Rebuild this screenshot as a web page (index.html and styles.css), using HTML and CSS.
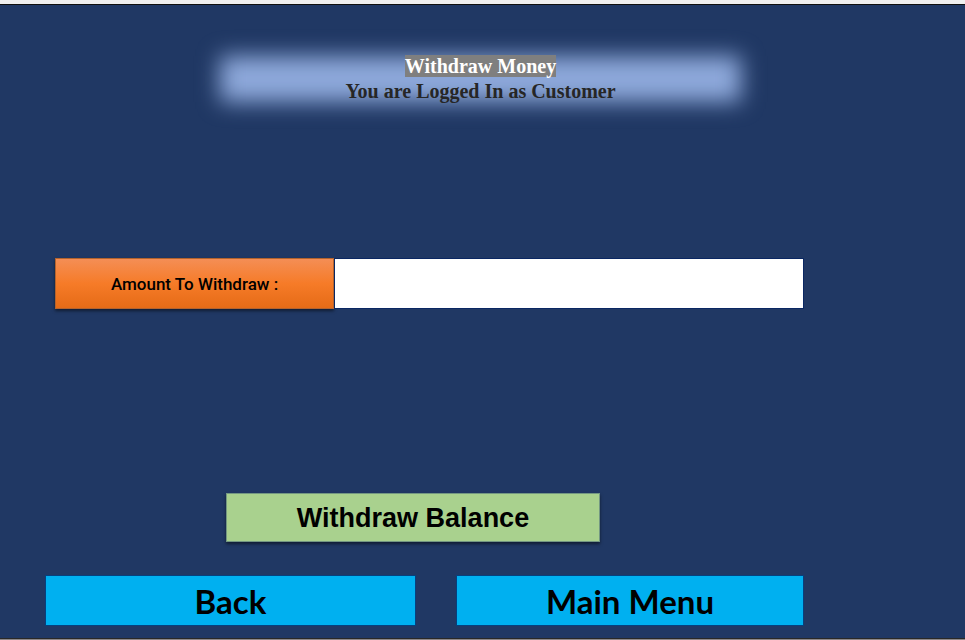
FILE: index.html
```html
<!DOCTYPE html>
<html lang="en">
<head>
<meta charset="utf-8">
<meta name="viewport" content="width=device-width, initial-scale=1">
<title>Withdraw Money</title>
<link rel="stylesheet" href="styles.css">
</head>
<body>
<main class="screen">
  <header class="banner">
    <h1 class="title"><span class="mark">Withdraw Money</span></h1>
    <p class="role">You are Logged In as Customer</p>
  </header>
  <form class="form">
    <div class="field">
      <label class="field-label" for="amount">Amount To Withdraw :</label>
      <input class="field-input" id="amount" name="amount" type="text">
    </div>
    <button class="submit" type="submit">Withdraw Balance</button>
    <nav class="actions">
      <button class="action" type="button">Back</button>
      <button class="action" type="button">Main Menu</button>
    </nav>
  </form>
</main>
</body>
</html>
```
FILE: styles.css
```css
* {
  box-sizing: border-box;
}

body {
  margin: 0;
  background: #203864;
}

.screen {
  display: flex;
  flex-direction: column;
  min-height: 100vh;
  padding: 48px 161px 13px 45px;
  border-top: 4px solid #f0f0f0;
  border-bottom: 1px solid #8c8888;
  box-shadow: inset 0 1px #101010, inset 0 -1px #282828;
}

.banner {
  position: relative;
  z-index: 0;
  margin: 0 51px 0 163px;
  padding: 2px 0;
  color: #262626;
  font: bold 20px/25px "Liberation Serif", serif;
  text-align: center;
}

.banner::before {
  content: "";
  position: absolute;
  z-index: -1;
  inset: 4px 12px;
  background: #8ea9db;
  filter: blur(11px);
}

.title,
.role {
  margin: 0;
  font: inherit;
}

.mark {
  background: #7f7f7f;
  color: #fff;
}

.form {
  display: flex;
  flex: 1;
  flex-direction: column;
}

.field {
  display: grid;
  grid-template-columns: 279fr 470fr;
  margin: 152px 0 auto 10px;
}

.field-label {
  display: flex;
  align-items: center;
  justify-content: center;
  height: 51px;
  border: 1px solid #b4632d;
  background: linear-gradient(#f48e55, #f67b28 50%, #e56b17);
  box-shadow: 0 2px 3px rgba(0, 0, 0, 0.5);
  color: #000;
  font: 500 17px/24px Roboto, sans-serif;
}

.field-input {
  width: 100%;
  height: 51px;
  padding: 0 12px;
  border: 1px solid #0a2763;
  border-radius: 0;
  background: #fff;
  font: 20px/24px Roboto, sans-serif;
}

.submit {
  height: 49px;
  margin: 0 204px 33px 181px;
  border: 1px solid #739782;
  background: #a9d18e;
  box-shadow: 0 2px 3px rgba(0, 0, 0, 0.5);
  color: #000;
  font: bold 27px/32px "Liberation Sans", sans-serif;
}

.actions {
  display: grid;
  grid-template-columns: 371fr 348fr;
  gap: 40px;
}

.action {
  height: 51px;
  padding: 0;
  border: 1px solid #06417f;
  background: #00b0f0;
  color: #000;
  font: bold 33px/40px Lato, sans-serif;
}
```
